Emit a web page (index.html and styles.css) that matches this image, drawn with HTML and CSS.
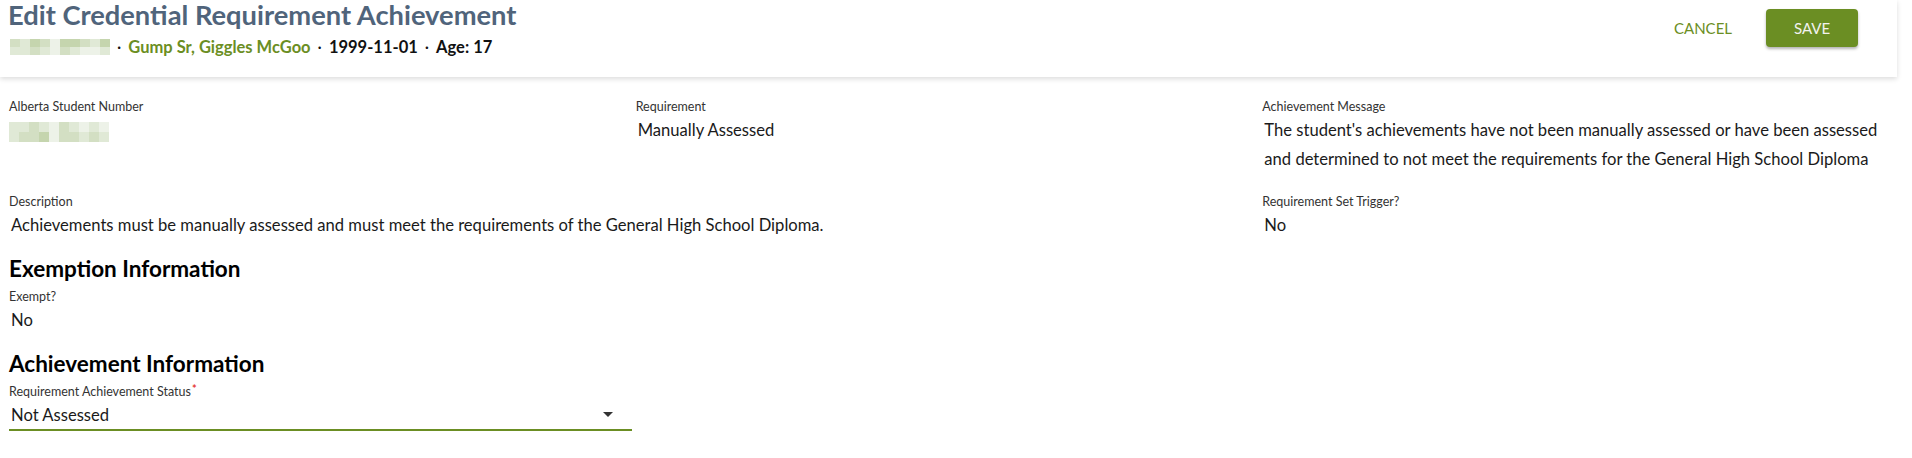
FILE: index.html
```html
<!DOCTYPE html>
<html lang="en">
<head>
<meta charset="utf-8">
<title>Edit Credential Requirement Achievement</title>
<link rel="stylesheet" href="styles.css">
</head>
<body>
<header class="page-header">
  <div class="heading-block">
    <h1 class="title">Edit Credential Requirement Achievement</h1>
    <div class="subtitle">
      <span class="blur blur-id" aria-label="redacted">
        <i class="p2"></i><i class="p3"></i><i class="p1"></i><i class="p2"></i><i class="p4"></i><i class="p1"></i><i class="p1"></i><i class="p2"></i><i class="p3"></i><i class="p1"></i>
        <i class="p3"></i><i class="p3"></i><i class="p2"></i><i class="p3"></i><i class="p4"></i><i class="p2"></i><i class="p3"></i><i class="p4"></i><i class="p4"></i><i class="p3"></i>
      </span>
      <span class="sep">·</span>
      <span class="student-name">Gump Sr, Giggles McGoo</span>
      <span class="sep">·</span>
      <span class="meta">1999-11-01</span>
      <span class="sep">·</span>
      <span class="meta">Age: 17</span>
    </div>
  </div>
  <div class="actions">
    <button class="btn-text" type="button">CANCEL</button>
    <button class="btn-primary" type="button">SAVE</button>
  </div>
</header>

<main class="content">
  <section class="field-grid">
    <div class="field">
      <div class="label">Alberta Student Number</div>
      <div class="value">
        <span class="blur blur-asn" aria-label="redacted">
          <i class="p3"></i><i class="p3"></i><i class="p2"></i><i class="p3"></i><i class="p4"></i><i class="p2"></i><i class="p3"></i><i class="p4"></i><i class="p3"></i><i class="p4"></i>
          <i class="p3"></i><i class="p2"></i><i class="p2"></i><i class="p1"></i><i class="p4"></i><i class="p2"></i><i class="p2"></i><i class="p3"></i><i class="p2"></i><i class="p3"></i>
        </span>
      </div>
    </div>
    <div class="field">
      <div class="label">Requirement</div>
      <div class="value">Manually Assessed</div>
    </div>
    <div class="field">
      <div class="label">Achievement Message</div>
      <div class="value">The student's achievements have not been manually assessed or have been assessed and determined to not meet the requirements for the General High School Diploma</div>
    </div>
    <div class="field span-2">
      <div class="label">Description</div>
      <div class="value">Achievements must be manually assessed and must meet the requirements of the General High School Diploma.</div>
    </div>
    <div class="field">
      <div class="label">Requirement Set Trigger?</div>
      <div class="value">No</div>
    </div>
  </section>

  <h2 class="section-title">Exemption Information</h2>
  <section class="field-grid">
    <div class="field">
      <div class="label">Exempt?</div>
      <div class="value">No</div>
    </div>
  </section>

  <h2 class="section-title">Achievement Information</h2>
  <section class="field-grid">
    <div class="field">
      <label class="label" for="status">Requirement Achievement Status<sup class="req">*</sup></label>
      <div class="select" id="status" role="combobox" aria-expanded="false">
        <span class="select-value">Not Assessed</span>
        <svg class="select-arrow" width="10" height="5" viewBox="0 0 10 5" aria-hidden="true"><path d="M0 0 L10 0 L5 5 Z" fill="#333"/></svg>
      </div>
    </div>
  </section>
</main>
</body>
</html>
```

FILE: styles.css
```css
* { box-sizing: border-box; }

html, body {
  margin: 0;
  padding: 0;
  background: #ffffff;
}

body {
  font-family: Lato, "Liberation Sans", sans-serif;
  color: #212121;
}

.page-header {
  width: calc(100% - 15px);
  height: 77px;
  display: flex;
  justify-content: space-between;
  align-items: flex-start;
  padding: 0 39px 0 8px;
  background: #ffffff;
  box-shadow: 0 2px 5px rgba(0, 0, 0, 0.14);
  position: relative;
}

.title {
  margin: 0;
  font-size: 27.3px;
  line-height: 30px;
  font-weight: 700;
  color: #50647b;
}

.subtitle {
  margin-top: 7px;
  display: flex;
  align-items: center;
  font-size: 16.5px;
  line-height: 20px;
  font-weight: 700;
  color: #111;
}

.sep {
  font-weight: 400;
  margin: 0 7px;
  color: #111;
}

.student-name {
  color: #6b8e23;
}

.meta {
  color: #111;
}

.blur {
  display: inline-grid;
  grid-auto-flow: row;
}

.blur i {
  display: block;
}

.blur-id {
  grid-template-columns: repeat(10, 10px);
  grid-template-rows: repeat(2, 8px);
  margin-left: 2px;
}

.blur-asn {
  grid-template-columns: repeat(10, 10px);
  grid-template-rows: repeat(2, 10px);
  vertical-align: middle;
  margin-left: -2px;
}

.p1 { background: #c5d5ae; }
.p2 { background: #d3dfc3; }
.p3 { background: #e0e9d6; }
.p4 { background: #edf2e8; }

.actions {
  display: flex;
  align-items: center;
  gap: 18px;
  margin-top: 9px;
}

.btn-text {
  font-family: inherit;
  font-size: 15px;
  background: none;
  border: 0;
  color: #6b8e23;
  padding: 0 16px;
  height: 38px;
  cursor: pointer;
}

.btn-primary {
  font-family: inherit;
  font-size: 15px;
  width: 92px;
  height: 38px;
  border: 0;
  border-radius: 4px;
  background: #6b8e23;
  color: #f2f2ee;
  box-shadow: 0 2px 3px rgba(0, 0, 0, 0.3);
  cursor: pointer;
}

.content {
  width: calc(100% - 15px);
  padding: 22px 8px 20px 9px;
}

.field-grid {
  display: grid;
  grid-template-columns: repeat(3, 1fr);
  row-gap: 19.5px;
}

.span-2 {
  grid-column: span 2;
}

.label {
  display: block;
  font-size: 12.5px;
  line-height: 16px;
  color: #333;
}

.value {
  margin-top: 1px;
  padding-left: 2px;
  font-size: 16.6px;
  line-height: 29px;
  color: #1a1a1a;
}

.section-title {
  margin: 15px 0 6px;
  font-size: 22.5px;
  line-height: 28px;
  font-weight: 700;
  color: #000;
}

.req {
  color: #e53935;
  font-size: 11px;
  font-weight: 700;
  line-height: 1;
  vertical-align: top;
  position: relative;
  top: -1px;
  margin-left: 1px;
}

.select {
  margin-top: 1px;
  width: calc(100% - 4px);
  height: 30px;
  display: flex;
  align-items: center;
  justify-content: space-between;
  padding: 0 19px 0 2px;
  border-bottom: 2px solid #6b8e23;
  font-size: 16.6px;
  line-height: 28px;
  color: #1a1a1a;
}

.select-arrow {
  display: block;
}
```
